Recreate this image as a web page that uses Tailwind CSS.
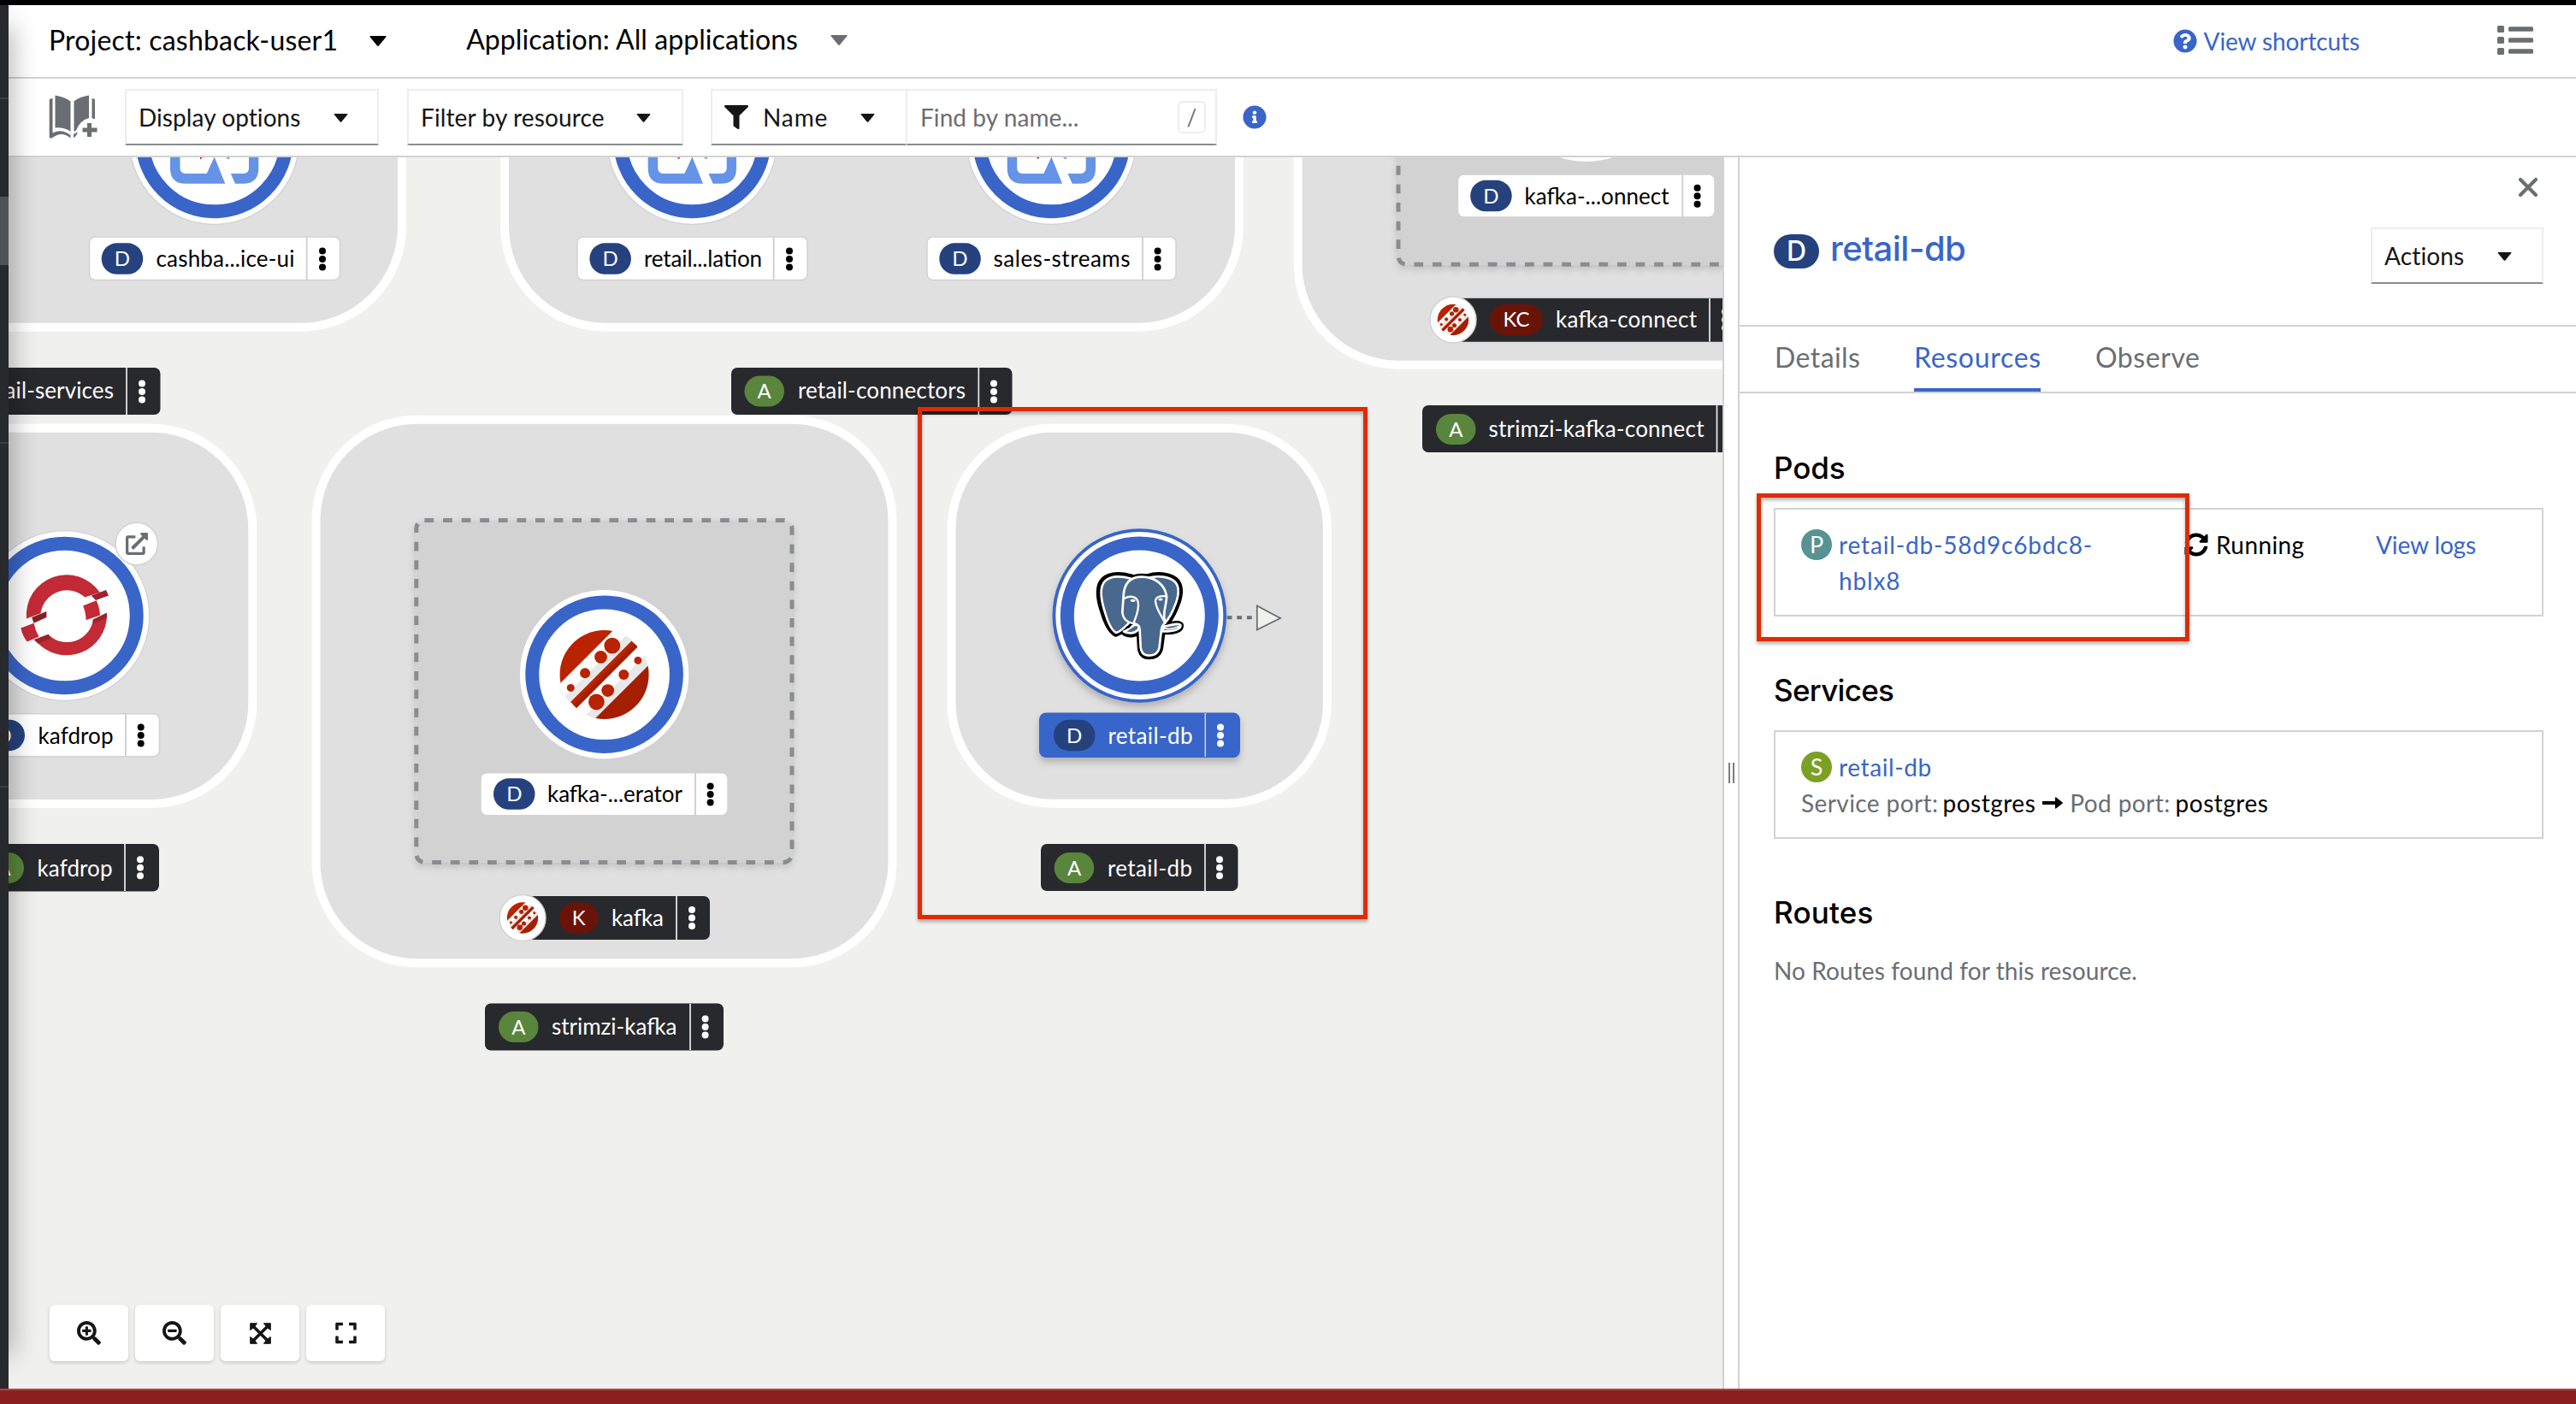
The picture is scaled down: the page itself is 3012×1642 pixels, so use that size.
<!DOCTYPE html>
<html lang="en">
<head>
<meta charset="utf-8">
<title>Topology</title>
<script src="https://cdn.jsdelivr.net/npm/@tailwindcss/browser@4"></script>
</head>
<body class="w-[3012px] h-[1642px] overflow-hidden bg-white text-black font-['Lato','Open_Sans',sans-serif] text-[28px] leading-[42px]">
<svg class="absolute w-0 h-0">
  <defs>
    <symbol id="caret" viewBox="0 0 16 10"><path d="M0.6 0H15.4Q16.4 0 15.8 1L8.8 9.5Q8 10.3 7.2 9.5L0.2 1Q-.4 0 .6 0Z" fill="currentColor"/></symbol>
    <g id="kebab"><circle cy="-9.5" r="4"/><circle r="4"/><circle cy="9.5" r="4"/></g>
    <g id="ring"><circle r="100" fill="#d2d2d2"/><circle r="98.700" fill="#fff"/><circle r="84.3" fill="none" stroke="#3965c9" stroke-width="16"/></g>
    <clipPath id="disc"><circle r="52"/></clipPath>
    <g id="strimzi">
      <g clip-path="url(#disc)">
        <g transform="rotate(-45)">
          <rect x="-60" y="-60" width="120" height="31" fill="#b92300"/>
          <rect x="-60" y="-29.2" width="120" height="58" fill="#fff"/>
          <rect x="-60" y="-14.5" width="120" height="9.2" fill="#e8e8e8"/>
          <rect x="-60" y="18" width="120" height="11" fill="#e8e8e8"/>
          <rect x="-50.5" y="-5.4" width="101" height="9.9" fill="#b92300"/>
          <rect x="-50.5" y="-1" width="101" height="5.5" fill="#a41f00"/>
          <rect x="-60" y="28.7" width="120" height="30" fill="#a41f00"/>
        </g>
      </g>
      <g fill="#b92300"><circle cx="9.2" cy="-33.8" r="9.4"/><circle cx="-4.1" cy="-20.6" r="7.4"/><circle cx="-22.5" cy="-1.8" r="6"/><circle cx="-39.3" cy="15.4" r="4.5"/><circle cx="39.3" cy="-16.6" r="4.5"/><circle cx="22.7" cy="0" r="6"/><circle cx="4.1" cy="18.6" r="7.4"/><circle cx="-9.2" cy="31.8" r="9.4"/></g>
    </g>
    <g id="quarkus">
      <g transform="translate(-250.6 0)" fill="#6593e8">
        <path d="M199 170V196.700Q199 214.700 217 214.700H263.300L250.700 183.500L241.700 203H217Q210.500 203 210.500 196.500V170Z"/>
        <path d="M302.300 170V196.700Q302.300 214.700 284.300 214.700H275L269.800 203H284.500Q291 203 291 196.500V170Z"/>
        <path d="M262.500 183H268V186.500Z"/><path d="M234 183H238L234 186.500Z" fill="#e3003c"/>
      </g>
    </g>
    <filter id="soft" x="-20%" y="-20%" width="140%" height="150%"><feDropShadow dx="0" dy="5" stdDeviation="4" flood-color="#000" flood-opacity=".22"/></filter>
    <filter id="faint" x="-10%" y="-10%" width="120%" height="120%"><feDropShadow dx="0" dy="4" stdDeviation="4" flood-color="#000" flood-opacity=".14"/></filter>
  </defs>
</svg>

<div class="flex flex-col w-full h-full">
  <div class="h-[6px] shrink-0 bg-black"></div>
  <div class="flex flex-1 min-h-0">
    <!-- Collapsed navigation rail -->
    <nav class="w-[10px] shrink-0 bg-[#28292d] flex flex-col">
      <div class="h-[110px] border-b-2 border-[#3c3f42]"></div>
      <div class="h-[114px]"></div>
      <div class="h-20 bg-[#4f5256]"></div>
      <div class="h-[209px] border-b-2 border-[#3c3f42]"></div>
      <div class="h-[402px] border-b-2 border-[#3c3f42]"></div>
    </nav>

    <main class="relative flex-1 min-w-0 flex flex-col overflow-hidden">
      <!-- Project bar -->
      <header class="h-[86px] shrink-0 flex items-center border-b-2 border-[#d2d2d2] pl-[47px] pr-[50px] text-[32px]">
        <span class="tracking-[0.19px] -mt-[2px]">Project: cashback-user1</span>
        <svg class="w-5 h-[12px] ml-[37px]"><use href="#caret"/></svg>
        <span class="tracking-[0.07px] ml-[93px] -mt-[5px]">Application: All applications</span>
        <svg class="w-5 h-[12px] ml-[38px] -mt-[3px] text-[#6a6e73]"><use href="#caret"/></svg>
        <a class="ml-auto flex items-center text-[28px] tracking-[-0.1px] text-[#3965c9] -mt-[1px]">
          <svg class="w-7 h-7 mr-[8px]" viewBox="0 0 512 512"><path fill="currentColor" d="M504 256c0 136.997-111.043 248-248 248S8 392.997 8 256C8 119.083 119.043 8 256 8s248 111.083 248 248zM262.655 90c-54.497 0-89.255 22.957-116.549 63.758-3.536 5.286-2.353 12.415 2.715 16.258l34.699 26.31c5.205 3.947 12.621 3.008 16.665-2.122 17.864-22.658 30.113-35.797 57.303-35.797 20.429 0 45.698 13.148 45.698 32.958 0 14.976-12.363 22.667-32.534 33.976C247.128 238.528 216 254.941 216 296v4c0 6.627 5.373 12 12 12h56c6.627 0 12-5.373 12-12v-1.333c0-28.462 83.186-29.647 83.186-106.667 0-58.002-60.165-102-116.531-102zM256 338c-25.365 0-46 20.635-46 46 0 25.364 20.635 46 46 46s46-20.636 46-46c0-25.365-20.635-46-46-46z"/></svg>
          <span>View shortcuts</span>
        </a>
        <svg class="w-[42px] h-[34px] ml-[161px] -mt-[2px]" viewBox="0 0 42 34" fill="#6a6e73"><rect width="8" height="8" rx="1.500"/><rect y="13" width="8" height="8" rx="1.500"/><rect y="26" width="8" height="8" rx="1.500"/><rect x="13" y="1.300" width="29" height="5.400" rx="1.500"/><rect x="13" y="14.300" width="29" height="5.400" rx="1.500"/><rect x="13" y="27.300" width="29" height="5.400" rx="1.500"/></svg>
      </header>

      <!-- Toolbar -->
      <div class="h-[92px] shrink-0 flex items-center border-b-2 border-[#d2d2d2] pl-[47px] text-[#151515]">
        <svg class="w-[58px] h-[52px] shrink-0" viewBox="0 0 58 52">
          <g fill="#6a6e73"><path d="M7.500 0.500Q19 2.500 25.500 7.500V43Q18 37.500 7.500 38.500Z"/><path d="M47 0.500Q35 2.500 29.500 7.500V43L32 41.500Q36 30 47 27Z"/><path d="M.700 6Q.700 4.500 4.500 4V44.500Q15 39 25.500 47V50.500Q15 42.500 6 49Q1.500 52 .700 49.500Z"/><path d="M50.500 4Q54 4.500 54 6V28.500Q52 27 50.500 27.500Z"/><path d="M29 46L33.500 43.500Q34.500 45.500 29 50.500Z"/></g>
          <path d="M47.500 33V49M39.500 41H56.500" stroke="#6a6e73" stroke-width="5"/>
        </svg>
        <button class="w-[297px] h-[66px] ml-[31px] flex items-center border-2 border-[#ededed] border-b-[#8a8d90] pl-[14px]">
          <span class="tracking-[0.07px] w-[234px] text-left -mt-[1px]">Display options</span><svg class="w-[17px] h-[10px] mt-[1px] -ml-[6px]"><use href="#caret"/></svg>
        </button>
        <button class="w-[323px] h-[66px] ml-[33px] flex items-center border-2 border-[#ededed] border-b-[#8a8d90] pl-[14px]">
          <span class="tracking-[0.12px] w-[252px] text-left -mt-[1px]">Filter by resource</span><svg class="w-[17px] h-[10px] mt-[1px]"><use href="#caret"/></svg>
        </button>
        <button class="w-[228px] h-[66px] ml-[32px] flex items-center border-2 border-r-0 border-[#ededed] border-b-[#8a8d90] pl-[14px]">
          <svg class="w-7 h-7" viewBox="0 0 512 512"><path fill="#151515" d="M487.976 0H24.028C2.71 0-8.047 25.866 7.058 40.971L192 225.941V432c0 7.831 3.821 15.17 10.237 19.662l80 55.98C298.02 518.69 320 507.493 320 487.98V225.941l184.947-184.97C520.021 25.896 509.338 0 487.976 0z"/></svg>
          <span class="tracking-[0.9px] ml-[17px] w-[114px] text-left -mt-[1px]">Name</span><svg class="w-[17px] h-[10px] mt-[1px]"><use href="#caret"/></svg>
        </button>
        <div class="w-[364px] h-[66px] flex items-center justify-between border-2 border-[#ededed] border-b-[#8a8d90] pl-[15px] pr-[11px] text-[#6a6e73]">
          <span class="tracking-[0.07px] -mt-[1px]">Find by name...</span>
          <kbd class="w-[33px] h-[38px] flex items-center justify-center rounded-[6px] border-2 border-[#ededed] font-['Lato',sans-serif] text-[26px]">/</kbd>
        </div>
        <svg class="w-7 h-7 ml-[30px]" viewBox="0 0 512 512"><path fill="#3965c9" d="M256 8C119.043 8 8 119.083 8 256c0 136.997 111.043 248 248 248s248-111.003 248-248C504 119.083 392.957 8 256 8zm0 110c23.196 0 42 18.804 42 42s-18.804 42-42 42-42-18.804-42-42 18.804-42 42-42zm56 254c0 6.627-5.373 12-12 12h-88c-6.627 0-12-5.373-12-12v-24c0-6.627 5.373-12 12-12h12v-64h-12c-6.627 0-12-5.373-12-12v-24c0-6.627 5.373-12 12-12h64c6.627 0 12 5.373 12 12v100h12c6.627 0 12 5.373 12 12v24z"/></svg>
      </div>

      <div class="flex flex-1 min-h-0">
        <!-- Topology canvas -->
        <section class="relative w-[2004px] shrink-0 bg-[#f0f0ef] overflow-hidden">
          <svg class="block w-[2004px] h-[1440px] text-[26px]" viewBox="10 184 2004 1440">
            <!-- application groups -->
            <g fill="#e0e0e0" stroke="#fff" stroke-width="10">
              <rect x="-400" y="0" width="870" height="382.700" rx="118"/>
              <rect x="590" y="-100" width="859" height="482.700" rx="118"/>
              <rect x="1517.500" y="-200" width="700" height="626.700" rx="118"/>
              <rect x="-200" y="500.700" width="495.300" height="439.300" rx="118"/>
              <rect x="369.500" y="490.700" width="674" height="635.600" rx="118"/>
              <rect x="1112.500" y="500.700" width="439.500" height="439" rx="118"/>
            </g>
            <!-- operator-backed groups -->
            <g fill="#d2d2d2" stroke="#8a8d90" stroke-width="5" stroke-dasharray="10.800 10.800">
              <rect x="486.800" y="608.400" width="439.200" height="400" rx="9.600" filter="url(#faint)"/>
              <rect x="1635" y="-90.700" width="439.200" height="400" rx="9.600" filter="url(#faint)"/>
            </g>

            <!-- nodes -->
            <use href="#ring" x="250.600" y="163"/><use href="#quarkus" x="250.600"/>
            <use href="#ring" x="809.300" y="163"/><use href="#quarkus" x="809.300"/>
            <use href="#ring" x="1229.300" y="163"/><use href="#quarkus" x="1229.300"/>
            <circle cx="1854.700" cy="90.500" r="98.500" fill="#fff"/>
            <use href="#ring" x="706.600" y="788.700"/><use href="#strimzi" x="706.600" y="789"/>

            <!-- kafdrop node -->
            <use href="#ring" x="75.400" y="720"/>
            <g fill="#c22a36">
              <path d="M31 723.400A47 47 0 0 1 116.700 692.800L99.200 698.500A31 31 0 0 0 47.500 717.300Z"/>
              <path d="M97 708.500L112.600 702.300Q116.500 710 117 719.600L100.500 725.300Q100.500 716 97 708.500Z"/>
              <path d="M125 719A47.200 47.200 0 0 1 44.800 752.800L58.500 744A31 31 0 0 0 108.500 727Z"/>
              <path d="M24.400 734.500L39.600 728.800Q41 737 45.500 744.400L31.700 750.600Q26 743 24.400 734.500Z"/>
            </g>
            <g fill="#9c222c"><path d="M106.700 696.600L124 690L127 696.600L112 702Z"/><path d="M108.500 724.500L125 716.500V723L108.500 729Z"/><path d="M39.600 748L56.500 741.800L60.300 746L44.800 753Z"/></g>
            <path d="M37.200 721.900L54.400 715V722L39.600 728.800Z" fill="#82202a"/>
            <circle cx="159.800" cy="636" r="24.700" fill="#fff" stroke="#d2d2d2" stroke-width="1.500"/>
            <path transform="translate(147 623) scale(.0508)" fill="#6a6e73" d="M432,320H400a16,16,0,0,0-16,16V448H64V128H208a16,16,0,0,0,16-16V80a16,16,0,0,0-16-16H48A48,48,0,0,0,0,112V464a48,48,0,0,0,48,48H400a48,48,0,0,0,48-48V336A16,16,0,0,0,432,320ZM488,0h-128c-21.370,0-32.050,25.910-17,41l35.730,35.730L135,320.370a24,24,0,0,0,0,34L157.670,377a24,24,0,0,0,34,0L435.280,133.320,471,169c15,15,41,4.500,41-17V24A24,24,0,0,0,488,0Z"/>

            <!-- retail-db node, selected -->
            <circle cx="1332.300" cy="720" r="101.800" fill="#3965c9" filter="url(#soft)"/>
            <circle cx="1332.300" cy="720" r="98" fill="#fff"/>
            <circle cx="1332.300" cy="720" r="84.500" fill="none" stroke="#3965c9" stroke-width="16"/>
            <g transform="translate(1210 600) scale(.33333)" stroke-linejoin="round" stroke-linecap="round">
              <g stroke="#000" stroke-width="24" fill="#000">
                <path d="M338 226C300 216 262 216 242 236C220 258 226 305 242 350C252 383 266 412 284 422C298 420 312 404 325 388L340 300Z"/>
                <path d="M395 226C430 214 478 218 498 242C514 265 506 300 493 330C485 352 475 368 462 386L420 300Z"/>
                <path d="M375 224C330 224 316 250 312 290V350C312 375 330 388 350 390Q366 394 368 410L371 470C373 494 384 502 400 502C424 502 436 490 439 470L447 408L458 385L462 290C455 250 420 224 375 224Z"/>
                <path d="M452 398C475 394 505 384 510 394C512 410 485 416 452 415Z"/>
                <path d="M366 398C350 396 330 412 312 416C328 430 352 424 366 416Z"/>
              </g>
              <g stroke="#fff" stroke-width="8" fill="#49688e">
                <path d="M338 230C300 220 265 220 246 239C226 260 232 305 246 348C256 383 270 412 285 420C298 418 312 404 328 388L340 300Z"/>
                <path d="M395 228C430 218 474 222 494 244C510 265 502 300 489 330C481 352 471 368 458 384L420 300Z"/>
                <path d="M452 398C475 394 505 384 511 393C514 408 485 416 448 415Z"/>
                <path d="M312 416C330 412 336 394 356 391Q368 396 364 408C350 424 328 424 312 416Z"/>
                <path d="M375 224C330 224 313 250 311 290L307 348C309 375 330 386 350 388Q368 392 368 410L371 470C373 490 384 500 400 500C422 500 434 488 437 470L444 408Q447 392 457 386C445 350 464 320 462 290C455 250 420 224 375 224Z"/>
              </g>
              <g fill="none" stroke="#fff" stroke-width="7">
                <path d="M313 300C332 290 362 288 363 320C364 348 352 368 346 388"/>
                <path d="M462 292C440 289 423 294 423 310C428 345 447 362 456 385"/>
                <path d="M450 402C468 412 490 404 509 397" stroke-width="5"/>
              </g>
              <path d="M318 400L342 390L330 404Z" fill="#000"/>
              <ellipse cx="344" cy="307" rx="9" ry="5" fill="#fff"/><ellipse cx="441" cy="303" rx="8" ry="4.500" fill="#fff"/>
            </g>
            <path d="M1434.700 722.300H1466" stroke="#6a6e73" stroke-width="4" stroke-dasharray="5.800 5.800"/>
            <path d="M1469.800 708.500V736.500L1497 723Z" fill="#f0f0ef" stroke="#6a6e73" stroke-width="1.800"/>

            <!-- workload labels -->
            <g fill="#fff" stroke="#d2d2d2" stroke-width="1.500">
              <rect x="104.500" y="277" width="293" height="50.500" rx="7"/>
              <rect x="675" y="277" width="269" height="50.500" rx="7"/>
              <rect x="1084" y="277" width="291" height="50.500" rx="7"/>
              <rect x="1704.500" y="204" width="300.500" height="50" rx="7"/>
              <rect x="-34" y="834.700" width="220.500" height="50" rx="7"/>
              <rect x="562" y="903.700" width="289" height="50" rx="7"/>
            </g>
            <path d="M358.700 277V327.500M904.700 277V327.500M1336 277V327.500M1967.300 204V254M147 835V885M813 904V954" stroke="#d2d2d2" stroke-width="2"/>
            <use href="#kebab" x="377" y="303"/><use href="#kebab" x="923" y="303"/><use href="#kebab" x="1353.600" y="303"/><use href="#kebab" x="1984.600" y="229.300"/><use href="#kebab" x="164.700" y="860"/><use href="#kebab" x="830.600" y="929"/>
            <rect x="1215" y="833.500" width="235" height="52.500" rx="8" fill="#3965c9" filter="url(#soft)"/>
            <path d="M1409.300 834V885" stroke="#d2d2d2" stroke-width="1.500"/><use href="#kebab" x="1427" y="860" fill="#fff"/>
            <g fill="#25427e">
              <rect x="118.700" y="284.300" width="48.500" height="36.500" rx="18"/><rect x="689.400" y="284.300" width="48.500" height="36.500" rx="18"/><rect x="1098.300" y="284.300" width="48.500" height="36.500" rx="18"/><rect x="1719.200" y="210.800" width="48.500" height="36.500" rx="18"/><rect x="-19.500" y="841.700" width="48.500" height="36.500" rx="18"/><rect x="577" y="910.300" width="48.500" height="36.500" rx="18"/><rect x="1232" y="841.700" width="48.500" height="36.500" rx="18"/>
            </g>
            <g fill="#fff" text-anchor="middle" class="text-[24px]">
              <text x="143" y="311">D</text><text x="713.600" y="311">D</text><text x="1122.500" y="311">D</text><text x="1743.500" y="237.500">D</text><text x="4.700" y="868.500">D</text><text x="601.300" y="937">D</text><text x="1256.200" y="868.500">D</text>
            </g>
            <text x="182.500" y="311.500" textLength="162">cashba...ice-ui</text>
            <text x="753" y="311.500" textLength="138">retail...lation</text>
            <text x="1161.500" y="311.500" textLength="160">sales-streams</text>
            <text x="1782.500" y="238.500" textLength="169">kafka-...onnect</text>
            <text x="44.500" y="869.500" textLength="88">kafdrop</text>
            <text x="640" y="937.700" textLength="158">kafka-...erator</text>
            <text x="1295.500" y="869.500" textLength="99" fill="#fff">retail-db</text>

            <!-- group labels -->
            <g fill="#28292d">
              <rect x="-60" y="430" width="247.500" height="55" rx="7"/>
              <rect x="855" y="430" width="328.500" height="55" rx="7"/>
              <rect x="1663" y="474" width="400" height="55" rx="7"/>
              <rect x="-36" y="987" width="222" height="55.500" rx="7"/>
              <rect x="1217" y="987" width="230.500" height="55" rx="7"/>
              <rect x="567" y="1173.500" width="279" height="55" rx="7"/>
              <rect x="1699" y="348.700" width="400" height="51" rx="7"/>
              <rect x="600" y="1048" width="230" height="51" rx="7"/>
            </g>
            <path d="M148 430V485M1144.300 430V485M2007.500 474V529M146 987V1042M1409 987V1042M807 1174V1228M1999 349V399.500M791 1048V1099" stroke="#e0e0e0" stroke-width="1.800"/>
            <g fill="#fff"><use href="#kebab" x="166" y="458"/><use href="#kebab" x="1162" y="458"/><use href="#kebab" x="164" y="1014.700"/><use href="#kebab" x="1426" y="1014.700"/><use href="#kebab" x="824.600" y="1201"/><use href="#kebab" x="2017" y="374"/><use href="#kebab" x="809" y="1073.500"/></g>
            <g fill="#59853c">
              <rect x="870.500" y="439.500" width="46.500" height="36" rx="18"/><rect x="1679" y="484" width="46.500" height="36" rx="18"/><rect x="-18.500" y="997" width="46.500" height="36" rx="18"/><rect x="1232.700" y="997" width="46.500" height="36" rx="18"/><rect x="583" y="1183" width="46.500" height="36" rx="18"/>
            </g>
            <rect x="1742" y="356" width="62" height="36" rx="18" fill="#6a1409"/><rect x="654" y="1055.500" width="45.500" height="36" rx="18" fill="#6a1409"/>
            <g fill="#fff" stroke="#d2d2d2" stroke-width="1.500"><circle cx="1699" cy="374" r="27"/><circle cx="611" cy="1073.500" r="27"/></g>
            <g transform="translate(1699 374) scale(.35)"><use href="#strimzi"/></g>
            <g transform="translate(611 1073.500) scale(.35)"><use href="#strimzi"/></g>
            <g fill="#fff" text-anchor="middle" class="text-[24px]">
              <text x="893.700" y="466">A</text><text x="1702.300" y="510.500">A</text><text x="4.700" y="1023.500">A</text><text x="1256" y="1023.500">A</text><text x="606.300" y="1209.500">A</text><text x="1773" y="382">KC</text><text x="676.800" y="1082">K</text>
            </g>
            <g fill="#fff">
              <text x="133" y="466" text-anchor="end" letter-spacing=".1">retail-services</text>
              <text x="933" y="466" textLength="196">retail-connectors</text>
              <text x="1740.500" y="511" textLength="252">strimzi-kafka-connect</text>
              <text x="1819" y="382.500" textLength="165">kafka-connect</text>
              <text x="43.500" y="1024.500" textLength="88">kafdrop</text>
              <text x="1295" y="1024.500" textLength="99">retail-db</text>
              <text x="715" y="1082.500" textLength="61">kafka</text>
              <text x="645" y="1210" textLength="146.500">strimzi-kafka</text>
            </g>
          </svg>

          <!-- canvas controls -->
          <div class="absolute left-[48px] bottom-[32px] flex gap-2">
            <button class="w-[92px] h-[66px] flex items-center justify-center bg-white rounded-[6px] shadow-[0_2px_4px_rgba(0,0,0,.16)]"><svg class="w-7 h-7" viewBox="0 0 512 512"><path fill="#151515" d="M304 192v32c0 6.600-5.400 12-12 12h-56v56c0 6.600-5.400 12-12 12h-32c-6.600 0-12-5.400-12-12v-56h-56c-6.600 0-12-5.400-12-12v-32c0-6.600 5.400-12 12-12h56v-56c0-6.600 5.400-12 12-12h32c6.600 0 12 5.400 12 12v56h56c6.600 0 12 5.400 12 12zm201 284.700L476.700 505c-9.400 9.400-24.600 9.400-33.900 0L343 405.300c-4.500-4.500-7-10.600-7-17V372c-35.300 27.600-79.700 44-128 44C93.100 416 0 322.900 0 208S93.100 0 208 0s208 93.100 208 208c0 48.300-16.400 92.700-44 128h16.300c6.400 0 12.500 2.500 17 7l99.700 99.700c9.300 9.400 9.300 24.600 0 34zM344 208c0-75.200-60.800-136-136-136S72 132.800 72 208s60.800 136 136 136 136-60.800 136-136z"/></svg></button>
            <button class="w-[92px] h-[66px] flex items-center justify-center bg-white rounded-[6px] shadow-[0_2px_4px_rgba(0,0,0,.16)]"><svg class="w-7 h-7" viewBox="0 0 512 512"><path fill="#151515" d="M304 192v32c0 6.600-5.400 12-12 12H124c-6.600 0-12-5.400-12-12v-32c0-6.600 5.400-12 12-12h168c6.600 0 12 5.400 12 12zm201 284.700L476.700 505c-9.400 9.400-24.600 9.400-33.900 0L343 405.300c-4.500-4.500-7-10.600-7-17V372c-35.300 27.600-79.700 44-128 44C93.100 416 0 322.900 0 208S93.100 0 208 0s208 93.100 208 208c0 48.300-16.400 92.700-44 128h16.300c6.400 0 12.500 2.500 17 7l99.700 99.700c9.300 9.400 9.300 24.600 0 34zM344 208c0-75.200-60.800-136-136-136S72 132.800 72 208s60.800 136 136 136 136-60.800 136-136z"/></svg></button>
            <button class="w-[92px] h-[66px] flex items-center justify-center bg-white rounded-[6px] shadow-[0_2px_4px_rgba(0,0,0,.16)]"><svg class="w-[25px] h-[25px]" viewBox="0 0 25 25"><path d="M4 4L21 21M21 4L4 21" stroke="#151515" stroke-width="3.600"/><path fill="#151515" stroke="#151515" stroke-linejoin="round" d="M.700 .700H8.500L6 4L4 6L.700 8.500ZM24.300 .700H16.500L19 4L21 6L24.300 8.500ZM.700 24.300H8.500L6 21L4 19L.700 16.500ZM24.300 24.300H16.500L19 21L21 19L24.300 16.500Z"/></svg></button>
            <button class="w-[92px] h-[66px] flex items-center justify-center bg-white rounded-[6px] shadow-[0_2px_4px_rgba(0,0,0,.16)]"><svg class="w-[25px] h-[28px]" viewBox="0 0 448 512"><path fill="#151515" d="M0 180V56c0-13.300 10.700-24 24-24h124c6.600 0 12 5.400 12 12v40c0 6.600-5.400 12-12 12H64v84c0 6.600-5.400 12-12 12H12c-6.600 0-12-5.400-12-12zM288 44v40c0 6.600 5.400 12 12 12h84v84c0 6.600 5.400 12 12 12h40c6.600 0 12-5.400 12-12V56c0-13.300-10.700-24-24-24H300c-6.600 0-12 5.400-12 12zm148 276h-40c-6.600 0-12 5.400-12 12v84h-84c-6.600 0-12 5.400-12 12v40c0 6.600 5.400 12 12 12h124c13.300 0 24-10.700 24-24V332c0-6.600-5.400-12-12-12zM160 468v-40c0-6.600-5.400-12-12-12H64v-84c0-6.600-5.400-12-12-12H12c-6.600 0-12 5.400-12 12v124c0 13.300 10.700 24 24 24h124c6.600 0 12-5.400 12-12z"/></svg></button>
          </div>
        </section>

        <!-- splitter -->
        <div class="w-[20px] shrink-0 bg-white border-x-2 border-[#d2d2d2] flex items-center justify-center gap-[3px]">
          <div class="w-[2px] h-6 bg-[#7a7d80]"></div><div class="w-[2px] h-6 bg-[#7a7d80]"></div>
        </div>

        <!-- Side panel -->
        <aside class="flex-1 min-w-0 flex flex-col">
          <div class="h-[198px] shrink-0 border-b-2 border-[#d2d2d2] pl-10 pr-[38px] flex flex-col">
            <div class="flex justify-end pt-[23px] pr-[6px]">
              <svg class="w-6 h-6" viewBox="0 0 24 24"><path d="M3 3L21 21M21 3L3 21" stroke="#6a6e73" stroke-width="4.200" stroke-linecap="round"/></svg>
            </div>
            <div class="flex justify-between items-start pt-[35px]">
              <h1 class="flex items-start font-['Inter'] text-[40px] font-medium tracking-[-0.5px] text-[#3965c9]">
                <span class="w-[53px] h-10 mt-[8px] rounded-full bg-[#25427e] text-white text-[32px] tracking-normal leading-10 text-center mr-[13px]">D</span>
                <span class="mt-[4px]">retail-db</span>
              </h1>
              <button class="w-[202px] h-[66px] flex items-center border-2 border-[#ededed] border-b-[#8a8d90] pl-[14px] text-[#151515]">
                <span class="tracking-[0.13px] w-[132px] text-left">Actions</span><svg class="w-[17px] h-[10px] mt-[1px]"><use href="#caret"/></svg>
              </button>
            </div>
          </div>
          <div class="h-[78px] shrink-0 border-b-2 border-[#d2d2d2] pl-10 flex text-[32px] leading-[71px] text-[#6a6e73]">
            <div class="w-[164px] pl-[1px] tracking-[0.42px]">Details</div>
            <div class="w-[148px] tracking-[0.7px] border-b-4 border-[#3965c9] text-[#3965c9]">Resources</div>
            <div class="ml-[64px] tracking-[0.55px]">Observe</div>
          </div>
          <div class="pl-10 pr-[38px] pt-[60px] flex flex-col">
            <h2 class="font-['Inter'] text-[35px] font-medium tracking-[-0.1px] leading-[54px]">Pods</h2>
            <div class="h-[127px] mt-[20px] border-2 border-[#d2d2d2] pl-[30px] pt-[20px] flex text-[28px] leading-[42px]">
              <span class="w-9 h-9 mt-[3px] rounded-full bg-[#569392] text-white text-[27px] leading-9 text-center">P</span>
              <a class="w-[330px] ml-2 tracking-[0.85px] text-[#3965c9]">retail-db-58d9c6bdc8-<br>hblx8</a>
              <svg class="w-[28px] h-[28px] ml-[74px] mt-[7px]" viewBox="0 0 512 512"><path d="M370.720 133.280C339.458 104.008 298.888 87.962 255.848 88c-77.458.068-144.328 53.178-162.791 126.850-1.344 5.363-6.122 9.150-11.651 9.150H24.103c-7.498 0-13.194-6.807-11.807-14.176C33.933 94.924 134.813 8 256 8c66.448 0 126.791 26.136 171.315 68.685L463.030 40.970C478.149 25.851 504 36.559 504 57.941V192c0 13.255-10.745 24-24 24H345.941c-21.382 0-32.090-25.851-16.971-40.971l41.750-41.749zM32 296h134.059c21.382 0 32.090 25.851 16.971 40.971l-41.750 41.750c31.262 29.273 71.835 45.319 114.876 45.280 77.418-.070 144.315-53.144 162.787-126.849 1.344-5.363 6.122-9.150 11.651-9.150h57.304c7.498 0 13.194 6.807 11.807 14.176C478.067 417.076 377.187 504 256 504c-66.448 0-126.791-26.136-171.315-68.685L48.970 471.030C33.851 486.149 8 475.441 8 454.059V320c0-13.255 10.745-24 24-24z"/></svg>
              <span class="w-[187px] ml-[9px] tracking-[0.4px]">Running</span>
              <a class="tracking-[-0.1px] text-[#3965c9]">View logs</a>
            </div>
            <h2 class="font-['Inter'] text-[35px] font-medium tracking-[-0.7px] leading-[54px] mt-[59px]">Services</h2>
            <div class="h-[127px] mt-[20px] border-2 border-[#d2d2d2] pl-[30px] pt-[20px] text-[28px] leading-[42px]">
              <div class="flex">
                <span class="w-9 h-9 mt-[3px] rounded-full bg-[#7ba023] text-white text-[27px] leading-9 text-center">S</span>
                <a class="ml-2 tracking-[0.6px] text-[#3965c9]">retail-db</a>
              </div>
              <div class="flex items-center text-[#6a6e73] tracking-[0.41px]">
                <span>Service port:</span><span class="ml-[5px] text-black tracking-[0.5px]">postgres</span>
                <svg class="w-6 h-[14px] mx-[8px]" viewBox="0 0 24 14"><path d="M0 5H15V1.200Q15 -.500 16.400 .800L23.400 6.200Q24.400 7 23.400 7.800L16.400 13.200Q15 14.500 15 12.800V9H0Z"/></svg>
                <span>Pod port:</span><span class="ml-[6px] text-black tracking-[0.5px]">postgres</span>
              </div>
            </div>
            <h2 class="font-['Inter'] text-[35px] font-medium tracking-[0.2px] leading-[54px] mt-[59px]">Routes</h2>
            <p class="mt-[20px] text-[#6a6e73] tracking-[0.11px]">No Routes found for this resource.</p>
          </div>
        </aside>
      </div>

      <!-- navigation drop shadow -->
      <div class="absolute -left-[30px] top-[24px] bottom-[40px] w-[30px] shadow-[4px_0_30px_rgba(0,0,0,.3)]"></div>
    </main>
  </div>
  <footer class="h-[18px] shrink-0 bg-[#8c1f1f] border-t-2 border-[#a5484b]"></footer>
</div>

<!-- highlight annotations -->
<div class="absolute left-[1073px] top-[476px] w-[526px] h-[599px] border-[5px] border-[#de2c00] shadow-[0_3px_4px_rgba(0,0,0,.3),inset_0_3px_4px_rgba(0,0,0,.3)]"></div>
<div class="absolute left-[2054px] top-[577px] w-[506px] h-[173px] border-[5px] border-[#de2c00] shadow-[0_3px_4px_rgba(0,0,0,.3),inset_0_3px_4px_rgba(0,0,0,.3)]"></div>
</body>
</html>
